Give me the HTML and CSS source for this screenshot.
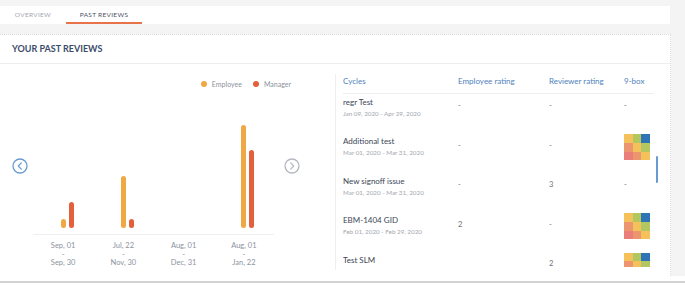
FILE: index.html
```html
<!DOCTYPE html>
<html lang="en">
  <head>
    <meta charset="UTF-8" />
    <meta name="viewport" content="width=device-width, initial-scale=1.0" />
    <title>Past Reviews</title>
    <link rel="stylesheet" href="styles.css">
  </head>
  <body>
    <div class="page">
      <div class="tabs">
        <div class="tab">OVERVIEW</div>
        <div class="tab active">PAST REVIEWS</div>
      </div>

      <div class="card">
        <div class="card-header">YOUR PAST REVIEWS</div>
        <div class="card-body">
          <!-- Chart of ratings per cycle -->
          <div class="chart-panel">
            <div class="legend">
              <span class="dot employee"></span><span class="legend-label">Employee</span>
              <span class="dot manager"></span><span class="legend-label">Manager</span>
            </div>
            <div class="chart">
              <div class="arrow">
                <svg width="16" height="16" viewBox="0 0 16 16">
                  <circle cx="8" cy="8" r="7" fill="none" stroke="#6a9bd0" stroke-width="1.3" />
                  <path d="M9.3 4.8 L6.3 8 L9.3 11.2" fill="none" stroke="#6a9bd0" stroke-width="1.2" stroke-linecap="round" stroke-linejoin="round" />
                </svg>
              </div>
              <div class="plot">
                <div class="bars">
                  <div class="group">
                    <div class="bar employee" style="height: 9px"></div>
                    <div class="bar manager" style="height: 26px"></div>
                  </div>
                  <div class="group">
                    <div class="bar employee" style="height: 52px"></div>
                    <div class="bar manager" style="height: 9px"></div>
                  </div>
                  <div class="group"></div>
                  <div class="group">
                    <div class="bar employee" style="height: 103px"></div>
                    <div class="bar manager" style="height: 78px"></div>
                  </div>
                </div>
                <div class="labels">
                  <div class="label">Sep, 01<br />-<br />Sep, 30</div>
                  <div class="label">Jul, 22<br />-<br />Nov, 30</div>
                  <div class="label">Aug, 01<br />-<br />Dec, 31</div>
                  <div class="label">Aug, 01<br />-<br />Jan, 22</div>
                </div>
              </div>
              <div class="arrow">
                <svg width="16" height="16" viewBox="0 0 16 16">
                  <circle cx="8" cy="8" r="7" fill="none" stroke="#b4b8c0" stroke-width="1.3" />
                  <path d="M6.7 4.8 L9.7 8 L6.7 11.2" fill="none" stroke="#b4b8c0" stroke-width="1.2" stroke-linecap="round" stroke-linejoin="round" />
                </svg>
              </div>
            </div>
          </div>

          <!-- Table of cycles -->
          <div class="table-panel">
            <div class="table-head">
              <div>Cycles</div>
              <div>Employee rating</div>
              <div>Reviewer rating</div>
              <div>9-box</div>
            </div>
            <div class="table-body">
              <div class="rows">
                <div class="row">
                  <div class="cycle">
                    <div class="cycle-name">regr Test</div>
                    <div class="cycle-date">Jan 09, 2020 - Apr 29, 2020</div>
                  </div>
                  <div class="value">-</div>
                  <div class="value">-</div>
                  <div class="value">-</div>
                </div>
                <div class="row">
                  <div class="cycle">
                    <div class="cycle-name">Additional test</div>
                    <div class="cycle-date">Mar 01, 2020 - Mar 31, 2020</div>
                  </div>
                  <div class="value">-</div>
                  <div class="value">-</div>
                  <div class="ninebox">
                    <span class="y"></span><span class="g"></span><span class="b"></span>
                    <span class="s"></span><span class="y"></span><span class="g"></span>
                    <span class="r"></span><span class="s"></span><span class="y"></span>
                  </div>
                </div>
                <div class="row">
                  <div class="cycle">
                    <div class="cycle-name">New signoff issue</div>
                    <div class="cycle-date">Mar 01, 2020 - Mar 31, 2020</div>
                  </div>
                  <div class="value">-</div>
                  <div class="value">3</div>
                  <div class="value">-</div>
                </div>
                <div class="row">
                  <div class="cycle">
                    <div class="cycle-name">EBM-1404 GID</div>
                    <div class="cycle-date">Feb 01, 2020 - Feb 29, 2020</div>
                  </div>
                  <div class="value">2</div>
                  <div class="value">-</div>
                  <div class="ninebox">
                    <span class="y"></span><span class="g"></span><span class="b"></span>
                    <span class="s"></span><span class="y"></span><span class="g"></span>
                    <span class="r"></span><span class="s"></span><span class="y"></span>
                  </div>
                </div>
                <div class="row">
                  <div class="cycle">
                    <div class="cycle-name">Test SLM</div>
                    <div class="cycle-date">&nbsp;</div>
                  </div>
                  <div class="value"></div>
                  <div class="value">2</div>
                  <div class="ninebox">
                    <span class="y"></span><span class="g"></span><span class="b"></span>
                    <span class="s"></span><span class="y"></span><span class="g"></span>
                    <span class="r"></span><span class="s"></span><span class="y"></span>
                  </div>
                </div>
              </div>
              <div class="scrollbar"></div>
            </div>
          </div>
        </div>
      </div>
    </div>
    <div class="footer"></div>
  </body>
</html>
```

FILE: styles.css
```css
body {
  margin: 0;
  font-family: Lato, "Open Sans", sans-serif;
  background: #fff;
  color: #3d4656;
}

/* Grey page behind the tabs and the card */
.page {
  background: #f4f4f4;
  height: 276px;
  padding-top: 6px;
  box-sizing: border-box;
}

.tabs {
  display: flex;
  width: 670px;
  height: 18px;
  background: #fff;
}

.tab {
  width: 66px;
  text-align: center;
  font-size: 6.5px;
  line-height: 17px;
  letter-spacing: 0.3px;
  color: #a2a6ad;
}

.tab.active {
  width: 76px;
  height: 16px;
  line-height: 17px;
  color: #4b5261;
  border-bottom: 2px solid #e8734a;
}

.card {
  margin-top: 10px;
  width: 671px;
  height: 242px;
  background: #fff;
  border-top: 1px dotted #dcdcdc;
  border-right: 1px dotted #dcdcdc;
  box-sizing: border-box;
}

.card-header {
  height: 28px;
  line-height: 28px;
  padding-left: 12px;
  font-size: 9px;
  font-weight: 700;
  color: #3b4c6b;
  border-bottom: 1px solid #eeeeee;
}

.card-body {
  display: flex;
  padding-top: 10px;
}

/* Left: bar chart */
.chart-panel {
  width: 335px;
  height: 196px;
  border-right: 1px solid #efefef;
}

.legend {
  display: flex;
  justify-content: flex-end;
  align-items: center;
  height: 12px;
  margin-top: 4px;
  padding-right: 44px;
  font-size: 7px;
  color: #8c929c;
}

.dot {
  width: 6px;
  height: 6px;
  border-radius: 50%;
  margin-right: 5px;
}

.legend-label + .dot {
  margin-left: 11px;
}

.employee {
  background: #f0a844;
}

.manager {
  background: #e4603c;
}

.chart {
  display: flex;
  align-items: flex-start;
  margin-top: 28px;
  padding-left: 12px;
}

.arrow {
  margin-top: 40px;
  width: 16px;
  height: 16px;
}

.plot {
  width: 241px;
  margin: 0 10px 0 5px;
}

.bars {
  display: flex;
  height: 110px;
  padding-bottom: 6px;
  border-bottom: 1px solid #efefef;
}

.group {
  flex: 1;
  display: flex;
  justify-content: center;
  align-items: flex-end;
  gap: 3px;
  padding-left: 8px;
}

.bar {
  width: 5px;
  border-radius: 3px;
}

.labels {
  display: flex;
  padding-top: 7px;
}

.label {
  flex: 1;
  text-align: center;
  font-size: 7.5px;
  line-height: 8.5px;
  color: #8c939e;
}

/* Right: cycles table */
.table-panel {
  margin-left: 7px;
  width: 316px;
}

.table-head,
.row {
  display: grid;
  grid-template-columns: 115px 91px 75px 30px;
}

.table-head {
  height: 14px;
  line-height: 14px;
  padding-bottom: 5px;
  width: 311px;
  font-size: 8px;
  color: #4f82bd;
  border-bottom: 1px solid #eeeeee;
}

.table-body {
  position: relative;
  height: 173px;
  overflow: hidden;
}

.rows {
  margin-top: -6px;
}

.row {
  height: 39.5px;
  align-items: center;
}

.cycle-name {
  font-size: 8px;
  line-height: 11px;
  color: #3d4656;
}

.cycle-date {
  font-size: 6.3px;
  line-height: 11px;
  color: #a3a7ae;
}

.value {
  font-size: 7.5px;
  color: #6b717b;
  padding-bottom: 4px;
}

.ninebox {
  display: grid;
  grid-template-columns: repeat(3, 1fr);
  width: 26px;
  height: 26px;
}

.ninebox .y { background: #f5c15b; }
.ninebox .g { background: #b2c75f; }
.ninebox .b { background: #2f74b5; }
.ninebox .s { background: #ec9670; }
.ninebox .r { background: #ea7e78; }

.scrollbar {
  position: absolute;
  left: 313px;
  top: 62px;
  width: 2px;
  height: 27px;
  border-radius: 1px;
  background: #6a9bd0;
}

.footer {
  margin-top: 5px;
  border-top: 2px solid #d2d2d2;
}
```
